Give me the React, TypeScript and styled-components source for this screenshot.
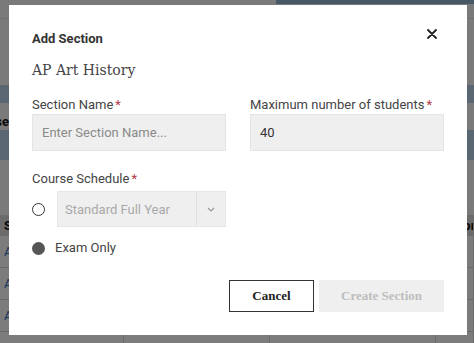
import * as React from "react";
import styled, { createGlobalStyle } from "styled-components";

const GlobalStyle = createGlobalStyle`
  html, body {
    margin: 0;
    padding: 0;
    background: #f4f4f4;
  }
  body {
    font-family: Roboto, "Liberation Sans", sans-serif;
  }
`;

const SLAB = `"DejaVu Serif", "Liberation Serif", serif`;
const BUTTON_FONT = `"Liberation Serif", "DejaVu Serif", serif`;

/* ---------- page behind the dialog ---------- */

const SPage = styled.div`
  position: relative;
  width: 474px;
  height: 343px;
  overflow: hidden;
  background: #f4f4f4;
  display: flex;
  flex-direction: column;
`;

const SHeader = styled.div`
  height: 18px;
  flex: 0 0 auto;
  display: flex;
  border-bottom: 1px solid #e0e0e0;
`;

const SHeaderAccent = styled.div`
  margin-left: 276px;
  flex: 1;
  height: 4px;
  background: #8fb0cc;
`;

interface IBand {
  h: number;
  tone?: "blue" | "plain";
}

const SBand = styled.div<IBand>`
  height: ${(p) => p.h}px;
  box-sizing: border-box;
  flex: 0 0 auto;
  background: ${(p) => (p.tone === "blue" ? "#b4cde3" : "#f4f4f4")};
  display: flex;
  align-items: center;
  padding-top: ${(p) => (p.tone === "blue" ? 0 : 10)}px;
`;

const SCutText = styled.div`
  width: 9px;
  overflow: hidden;
  display: flex;
  justify-content: flex-end;
  white-space: nowrap;
  font-weight: 700;
  font-size: 13px;
  color: #111;
`;

const STable = styled.div`
  display: flex;
  flex-direction: column;
  margin-top: 55px;
`;

interface IRow {
  head?: boolean;
}

const STableRow = styled.div<IRow>`
  display: grid;
  grid-template-columns: 124px 146px 166px 1fr;
  height: ${(p) => (p.head ? 20 : 31)}px;
  background: ${(p) => (p.head ? "#d6d6d6" : "#f8f8f8")};
  border-bottom: 1px solid #d0d0d0;
`;

const STableCell = styled.div<IRow>`
  border-right: 1px solid #d6d6d6;
  display: flex;
  align-items: center;
  padding-left: 4px;
  font-size: 13px;
  font-weight: ${(p) => (p.head ? 700 : 400)};
  color: ${(p) => (p.head ? "#111" : "#2a6bb0")};
  overflow: hidden;
  white-space: nowrap;
`;

const SBackdrop = styled.div`
  position: absolute;
  inset: 0;
  background: rgba(0, 0, 0, 0.5);
`;

/* ---------- dialog ---------- */

const SModal = styled.div`
  position: absolute;
  top: 5px;
  left: 9px;
  width: 458px;
  height: 330px;
  box-sizing: border-box;
  padding: 0 23px;
  background: #fff;
  display: flex;
  flex-direction: column;
`;

const SModalHeader = styled.div`
  margin-top: 24px;
  height: 18px;
  display: flex;
  align-items: center;
  justify-content: space-between;
`;

const STitle = styled.h2`
  margin: 0;
  font-size: 13px;
  font-weight: 700;
  color: #333;
`;

const SClose = styled.button`
  border: 0;
  background: none;
  padding: 0;
  margin: 0 6px 8px 0;
  width: 12px;
  height: 12px;
  display: flex;
  align-items: center;
  justify-content: center;
  cursor: pointer;
`;

const SCourse = styled.div`
  margin-top: 13px;
  height: 20px;
  line-height: 20px;
  font-family: ${SLAB};
  font-size: 14px;
  color: #444;
`;

const SFields = styled.div`
  margin-top: 16px;
  display: grid;
  grid-template-columns: 1fr 1fr;
  column-gap: 24px;
`;

const SField = styled.div`
  display: flex;
  flex-direction: column;
`;

interface ILabel {
  gap?: number;
}

const SLabel = styled.label<ILabel>`
  display: block;
  height: 18px;
  line-height: 18px;
  margin-top: ${(p) => p.gap ?? 0}px;
  font-size: 13px;
  color: #444;
`;

const SRequired = styled.span`
  color: #b53a45;
  margin-left: 2px;
`;

const SInput = styled.input`
  box-sizing: border-box;
  height: 37px;
  width: 100%;
  margin: 0;
  padding: 0 9px;
  border: 1px solid #e4e4e4;
  background: #efefef;
  font-family: Roboto, "Liberation Sans", sans-serif;
  font-size: 13px;
  color: #333;
  outline: none;

  &::placeholder {
    color: #8a8a8a;
  }
`;

interface IOption {
  gap: number;
}

const SOption = styled.div<IOption>`
  margin-top: ${(p) => p.gap}px;
  display: flex;
  align-items: center;
`;

interface IRadio {
  checked?: boolean;
}

const SRadio = styled.span<IRadio>`
  box-sizing: border-box;
  width: 13px;
  height: 13px;
  border-radius: 50%;
  flex: 0 0 auto;
  border: ${(p) => (p.checked ? "none" : "1.6px solid #333")};
  background: ${(p) => (p.checked ? "#555" : "#fff")};
`;

const SSelect = styled.div`
  margin-left: 12px;
  box-sizing: border-box;
  width: 169px;
  height: 36px;
  display: flex;
  background: #efefef;
  border: 1px solid #e6e6e6;
`;

const SSelectValue = styled.div`
  flex: 1;
  display: flex;
  align-items: center;
  padding-left: 7px;
  font-size: 13px;
  color: #a9a9a9;
`;

const SSelectArrow = styled.div`
  width: 28px;
  border-left: 1px solid #e0e0e0;
  display: flex;
  align-items: center;
  justify-content: center;
`;

const SOptionText = styled.span`
  margin-left: 10px;
  font-size: 13px;
  color: #444;
  line-height: 18px;
`;

const SActions = styled.div`
  margin-top: 23px;
  display: flex;
  justify-content: flex-end;
  gap: 5px;
`;

interface IButton {
  primary?: boolean;
}

const SButton = styled.button<IButton>`
  box-sizing: border-box;
  height: 32px;
  width: ${(p) => (p.primary ? 125 : 85)}px;
  padding: 0;
  font-family: ${BUTTON_FONT};
  font-size: 13px;
  font-weight: 700;
  border: 1px solid ${(p) => (p.primary ? "#efefef" : "#333")};
  background: ${(p) => (p.primary ? "#efefef" : "#fff")};
  color: ${(p) => (p.primary ? "#bdbdbd" : "#222")};
  cursor: ${(p) => (p.primary ? "default" : "pointer")};
`;

const tableRows = ["AP", "AP", "AP", "AP"];

const App = () => {
  const [name, setName] = React.useState("");
  const [max, setMax] = React.useState("40");

  return (
    <>
      <GlobalStyle />
      <SPage>
        <SHeader>
          <SHeaderAccent />
        </SHeader>
        <SBand h={66} />
        <SBand h={18} tone="blue" />
        <SBand h={27}>
          <SCutText>Course</SCutText>
        </SBand>
        <SBand h={30} tone="blue" />
        <STable>
          <STableRow head>
            <STableCell head>Sec</STableCell>
            <STableCell head />
            <STableCell head />
            <STableCell head>Action</STableCell>
          </STableRow>
          {tableRows.map((r, i) => (
            <STableRow key={i}>
              <STableCell>{r}</STableCell>
              <STableCell />
              <STableCell />
              <STableCell />
            </STableRow>
          ))}
        </STable>

        <SBackdrop />

        <SModal role="dialog" aria-label="Add Section">
          <SModalHeader>
            <STitle>Add Section</STitle>
            <SClose aria-label="Close">
              <svg width="10" height="10" viewBox="0 0 10 10">
                <path
                  d="M1 1 L9 9 M9 1 L1 9"
                  stroke="#222"
                  strokeWidth="1.8"
                  strokeLinecap="round"
                />
              </svg>
            </SClose>
          </SModalHeader>

          <SCourse>AP Art History</SCourse>

          <SFields>
            <SField>
              <SLabel>
                Section Name<SRequired>*</SRequired>
              </SLabel>
              <SInput
                placeholder="Enter Section Name..."
                value={name}
                onChange={(e) => setName(e.target.value)}
              />
            </SField>
            <SField>
              <SLabel>
                Maximum number of students<SRequired>*</SRequired>
              </SLabel>
              <SInput value={max} onChange={(e) => setMax(e.target.value)} />
            </SField>
          </SFields>

          <SLabel gap={19}>
            Course Schedule<SRequired>*</SRequired>
          </SLabel>

          <SOption gap={3}>
            <SRadio />
            <SSelect>
              <SSelectValue>Standard Full Year</SSelectValue>
              <SSelectArrow>
                <svg width="8" height="5" viewBox="0 0 8 5">
                  <path
                    d="M1 1 L4 4 L7 1"
                    fill="none"
                    stroke="#999"
                    strokeWidth="1.2"
                  />
                </svg>
              </SSelectArrow>
            </SSelect>
          </SOption>

          <SOption gap={12}>
            <SRadio checked />
            <SOptionText>Exam Only</SOptionText>
          </SOption>

          <SActions>
            <SButton>Cancel</SButton>
            <SButton primary disabled>
              Create Section
            </SButton>
          </SActions>
        </SModal>
      </SPage>
    </>
  );
};

export default App;
